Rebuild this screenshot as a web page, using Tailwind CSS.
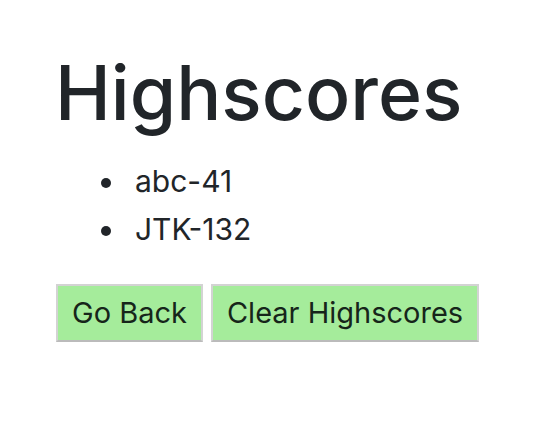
<!DOCTYPE html>
<html lang="en">
<head>
<meta charset="utf-8">
<meta name="viewport" content="width=device-width, initial-scale=1">
<title>Highscores</title>
<script src="https://cdn.jsdelivr.net/npm/@tailwindcss/browser@4"></script>
</head>
<body class="bg-white font-[Inter,sans-serif] text-[#212529]">
<main class="px-[55px] pt-[45px]">
<h1 class="mb-4 text-[75px] leading-[96px] font-medium">Highscores</h1>
<ul class="mb-[31px] list-disc pl-18 text-[30px] leading-[48px]">
<li class="pl-2">abc-41</li>
<li class="pl-2">JTK-132</li>
</ul>
<div class="flex flex-wrap gap-2 pl-px text-[29px] leading-[54px] text-[#16251a]">
<button type="button" class="border-2 border-[#d3d3d3] border-b-[#bbbbbb] bg-[#a5ec9b] px-3.5 whitespace-nowrap">Go Back</button>
<button type="button" class="border-2 border-[#d3d3d3] border-b-[#bbbbbb] bg-[#a5ec9b] px-3.5 whitespace-nowrap">Clear Highscores</button>
</div>
</main>
</body>
</html>
